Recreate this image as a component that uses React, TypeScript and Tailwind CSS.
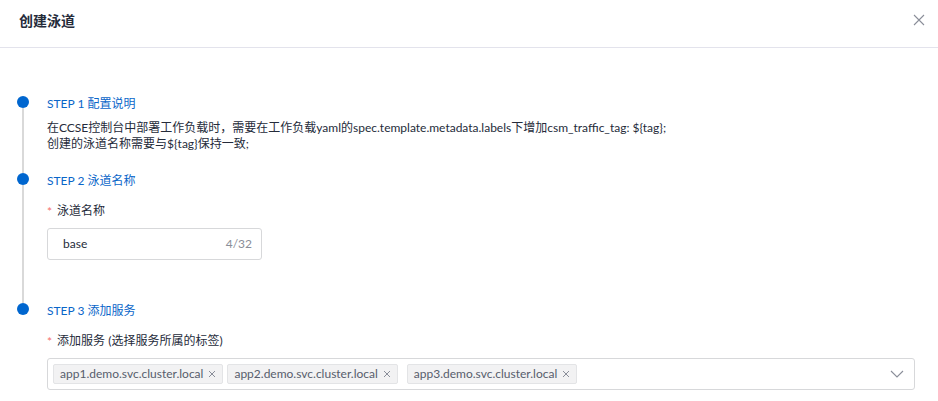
import React from "react";

const tags = ["app1.demo.svc.cluster.local", "app2.demo.svc.cluster.local", "app3.demo.svc.cluster.local"];

const Rail = ({ first, last }: { first?: boolean; last?: boolean }) => (
  <div className="flex w-3 flex-col items-center">
    <div className={`h-[3px] w-[2px] ${first ? "bg-transparent" : "bg-[#d9d9d9]"}`} />
    <div className="h-3 w-3 rounded-full bg-[#0066cf]" />
    {!last && <div className="w-[2px] flex-1 bg-[#d9d9d9]" />}
  </div>
);

const StepTitle = ({ children }: { children: React.ReactNode }) => (
  <div className="h-5 pt-px text-[12px] leading-5 text-[#0a66c9]">{children}</div>
);

const Label = ({ children }: { children: React.ReactNode }) => (
  <div className="flex h-5 items-center text-[12px] leading-5 text-[#252b3a]">
    <span className="mr-[5px] mt-[2px] text-[#f66f6a]">*</span>
    {children}
  </div>
);

const App = () => {
  return (
    <div
      className="h-[401px] w-[938px] overflow-hidden bg-white text-[#252b3a]"
      style={{ fontFamily: 'Lato, "Noto Sans CJK SC", sans-serif' }}
    >
      {/* header */}
      <div className="flex h-12 items-center justify-between border-b border-[#e3e3ec] pl-[19px] pr-[13px]">
        <div className="mb-[6px] text-[14px] font-semibold text-[#252b3a]">创建泳道</div>
        <svg width="12" height="12" viewBox="0 0 12 12" className="mb-[7px]">
          <path d="M1 1L11 11M11 1L1 11" stroke="#8a8e99" strokeWidth="1.1" fill="none" />
        </svg>
      </div>

      {/* steps */}
      <div className="pl-[17px] pr-[23px] pt-[45px]">
        {/* step 1 */}
        <div className="flex gap-[18px]">
          <Rail first />
          <div className="flex-1 pb-[18px]">
            <StepTitle>STEP 1 配置说明</StepTitle>
            <div className="mt-[7px] text-[12px] leading-4 text-[#252b3a]">
              <div>在CCSE控制台中部署工作负载时，需要在工作负载yaml的spec.template.metadata.labels下增加csm_traffic_tag: ${"{tag}"};</div>
              <div>创建的泳道名称需要与${"{tag}"}保持一致;</div>
            </div>
          </div>
        </div>

        {/* step 2 */}
        <div className="flex gap-[18px]">
          <Rail />
          <div className="flex-1 pb-[40px]">
            <StepTitle>STEP 2 泳道名称</StepTitle>
            <div className="mt-[11px]">
              <Label>泳道名称</Label>
            </div>
            <div className="mt-[7px] flex h-8 w-[215px] items-center justify-between rounded-[3px] border border-[#d7d8da] pl-[15px] pr-[9px] text-[12px]">
              <span className="text-[#252b3a]">base</span>
              <span className="text-[#8a8e99]">4/32</span>
            </div>
          </div>
        </div>

        {/* step 3 */}
        <div className="flex gap-[18px]">
          <Rail last />
          <div className="flex-1">
            <StepTitle>STEP 3 添加服务</StepTitle>
            <div className="mt-[11px]">
              <Label>添加服务 (选择服务所属的标签)</Label>
            </div>
            <div className="mt-[7px] flex h-8 w-[868px] items-center justify-between rounded-[3px] border border-[#d7d8da] pl-[5px] pr-[10px]">
              <div className="flex items-center">
                {tags.map((t, i) => (
                  <div
                    key={t}
                    className={`flex h-5 items-center rounded-[2px] border border-[#e3e4e6] bg-[#f2f2f3] pl-[6px] pr-[6px] text-[12px] text-[#575d6c] ${i === 1 ? "ml-[4px]" : i === 2 ? "ml-[9px]" : ""}`}
                  >
                    <span>{t}</span>
                    <svg width="8" height="8" viewBox="0 0 8 8" className="ml-[5px]">
                      <path d="M1 1L7 7M7 1L1 7" stroke="#8a8e99" strokeWidth="1" fill="none" />
                    </svg>
                  </div>
                ))}
              </div>
              <svg width="14" height="8" viewBox="0 0 14 8">
                <path d="M1 1L7 7L13 1" stroke="#8a8e99" strokeWidth="1.1" fill="none" />
              </svg>
            </div>
          </div>
        </div>
      </div>
    </div>
  );
};

export default App;
